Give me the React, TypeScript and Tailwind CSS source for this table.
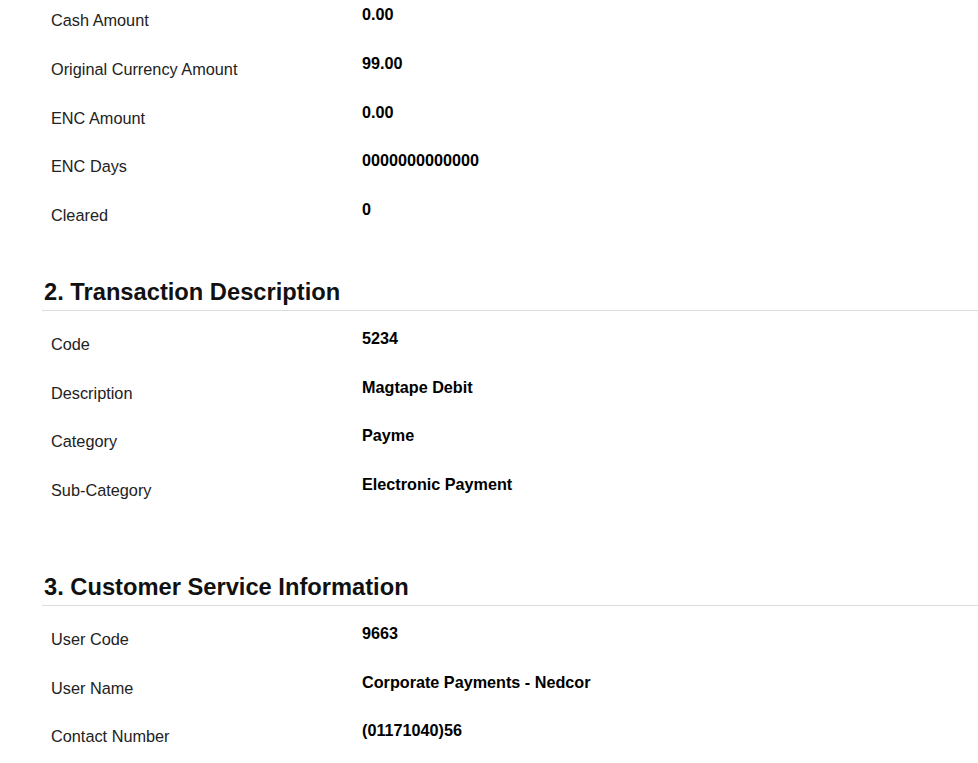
import React from 'react';

type Field = { label: string; value: string };

const cashFields: Field[] = [
  { label: 'Cash Amount', value: '0.00' },
  { label: 'Original Currency Amount', value: '99.00' },
  { label: 'ENC Amount', value: '0.00' },
  { label: 'ENC Days', value: '0000000000000' },
  { label: 'Cleared', value: '0' },
];

const descriptionFields: Field[] = [
  { label: 'Code', value: '5234' },
  { label: 'Description', value: 'Magtape Debit' },
  { label: 'Category', value: 'Payme' },
  { label: 'Sub-Category', value: 'Electronic Payment' },
];

const serviceFields: Field[] = [
  { label: 'User Code', value: '9663' },
  { label: 'User Name', value: 'Corporate Payments - Nedcor' },
  { label: 'Contact Number', value: '(01171040)56' },
];

const FieldRow: React.FC<{ field: Field }> = ({ field }) => (
  <div className="flex h-[48.75px] pl-[9px]">
    <div className="w-[311px] shrink-0 pt-[6px] text-[16.3px] leading-[18px] text-[#222]">
      {field.label}
    </div>
    <div className="text-[16.2px] font-bold leading-[18px] text-black">{field.value}</div>
  </div>
);

const SectionHeading: React.FC<{ title: string }> = ({ title }) => (
  <div className="border-b border-[#dcdcdc] pb-[4px] pl-[2px]">
    <h2 className="text-[23.7px] font-bold leading-[28px] text-[#111]">{title}</h2>
  </div>
);

export default function App() {
  return (
    <div
      className="min-h-screen bg-white pl-[42px] pt-[5px]"
      style={{ fontFamily: '"Liberation Sans", Arial, sans-serif' }}
    >
      {/* 1. cash details (continued) */}
      <div>
        {cashFields.map((f) => (
          <FieldRow key={f.label} field={f} />
        ))}
      </div>

      {/* 2. Transaction Description */}
      <div className="mt-[29px]">
        <SectionHeading title="2. Transaction Description" />
        <div className="pt-[18px]">
          {descriptionFields.map((f) => (
            <FieldRow key={f.label} field={f} />
          ))}
        </div>
      </div>

      {/* 3. Customer Service Information */}
      <div className="mt-[49px]">
        <SectionHeading title="3. Customer Service Information" />
        <div className="pt-[18px]">
          {serviceFields.map((f) => (
            <FieldRow key={f.label} field={f} />
          ))}
        </div>
      </div>
    </div>
  );
}
